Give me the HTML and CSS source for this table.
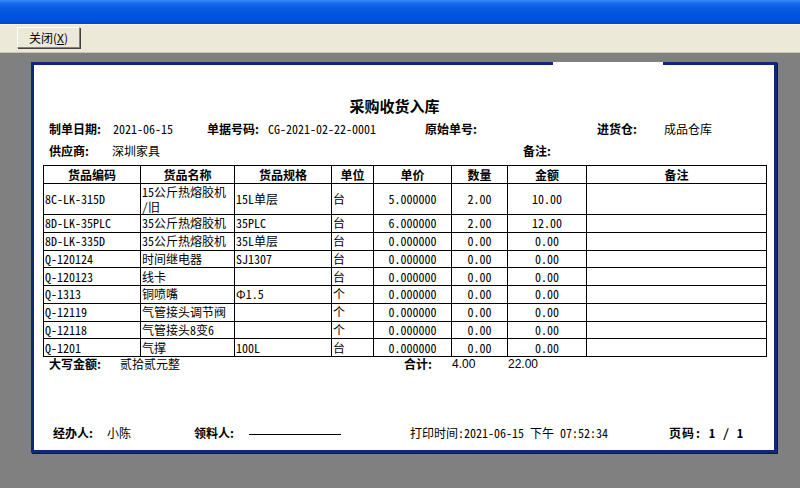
FILE: index.html
```html
<!DOCTYPE html>
<html lang="zh-CN">
<head>
<meta charset="utf-8">
<title>采购收货入库</title>
<link rel="stylesheet" href="styles.css">
</head>
<body>
<div class="window">
  <div class="titlebar"></div>
  <div class="toolbar">
    <button class="btn">关闭(<u>X</u>)</button>
  </div>
  <div class="workspace">
    <div class="paper">
      <div class="doc-title">采购收货入库</div>
      <div class="info-row">
        <span class="lbl w64">制单日期:</span>
        <span class="val w94">2021-06-15</span>
        <span class="lbl w61">单据号码:</span>
        <span class="val w157">CG-2021-02-22-0001</span>
        <span class="lbl w172">原始单号:</span>
        <span class="lbl w67">进货仓:</span>
        <span class="val">成品仓库</span>
      </div>
      <div class="info-row">
        <span class="lbl w63">供应商:</span>
        <span class="val w411">深圳家具</span>
        <span class="lbl">备注:</span>
      </div>
      <table class="grid">
        <colgroup>
          <col style="width:97px"><col style="width:94px"><col style="width:97px"><col style="width:42px">
          <col style="width:78px"><col style="width:56px"><col style="width:79px"><col style="width:180px">
        </colgroup>
        <thead>
          <tr class="head"><th>货品编码</th><th>货品名称</th><th>货品规格</th><th>单位</th><th>单价</th><th>数量</th><th>金额</th><th>备注</th></tr>
        </thead>
        <tbody>
          <tr class="tall"><td>8C-LK-315D</td><td class="wrap">15公斤热熔胶机<br>/旧</td><td>15L单层</td><td>台</td><td class="c">5.000000</td><td class="c">2.00</td><td class="c">10.00</td><td></td></tr>
          <tr><td>8D-LK-35PLC</td><td>35公斤热熔胶机</td><td>35PLC</td><td>台</td><td class="c">6.000000</td><td class="c">2.00</td><td class="c">12.00</td><td></td></tr>
          <tr><td>8D-LK-335D</td><td>35公斤热熔胶机</td><td>35L单层</td><td>台</td><td class="c">0.000000</td><td class="c">0.00</td><td class="c">0.00</td><td></td></tr>
          <tr><td>Q-120124</td><td>时间继电器</td><td>SJ1307</td><td>台</td><td class="c">0.000000</td><td class="c">0.00</td><td class="c">0.00</td><td></td></tr>
          <tr><td>Q-120123</td><td>线卡</td><td></td><td>台</td><td class="c">0.000000</td><td class="c">0.00</td><td class="c">0.00</td><td></td></tr>
          <tr><td>Q-1313</td><td>铜喷嘴</td><td>Φ1.5</td><td>个</td><td class="c">0.000000</td><td class="c">0.00</td><td class="c">0.00</td><td></td></tr>
          <tr><td>Q-12119</td><td>气管接头调节阀</td><td></td><td>个</td><td class="c">0.000000</td><td class="c">0.00</td><td class="c">0.00</td><td></td></tr>
          <tr><td>Q-12118</td><td>气管接头8变6</td><td></td><td>个</td><td class="c">0.000000</td><td class="c">0.00</td><td class="c">0.00</td><td></td></tr>
          <tr><td>Q-1201</td><td>气撑</td><td>100L</td><td>台</td><td class="c">0.000000</td><td class="c">0.00</td><td class="c">0.00</td><td></td></tr>
        </tbody>
      </table>
      <div class="total-row">
        <span class="lbl w71">大写金额:</span>
        <span class="val w284">贰拾贰元整</span>
        <span class="lbl w48">合计:</span>
        <span class="num w56">4.00</span>
        <span class="num">22.00</span>
      </div>
      <div class="footer">
        <span class="lbl w54">经办人:</span>
        <span class="val w87">小陈</span>
        <span class="lbl w55">领料人:</span>
        <span class="sign"></span>
        <span class="val w259">打印时间:2021-06-15 下午 07:52:34</span>
        <span class="lbl page">页码: 1 / 1</span>
      </div>
    </div>
  </div>
</div>
</body>
</html>
```

FILE: styles.css
```css
html, body {
  margin: 0;
  padding: 0;
}
body {
  width: 800px;
  height: 488px;
  overflow: hidden;
  background: #808080;
  font-family: "Noto Sans Mono CJK SC", "Noto Sans CJK SC", monospace;
  font-size: 12px;
  color: #000;
}
.window {
  display: flex;
  flex-direction: column;
  height: 488px;
}
.titlebar {
  height: 24px;
  background: linear-gradient(to bottom, #3a8cf8 0px, #1a6cf0 3px, #0a5be2 8px, #0055e0 14px, #0050dc 20px, #0046cc 24px);
}
.toolbar {
  background: #ece9d8;
  border-top: 1px solid #f6f4ec;
  border-bottom: 1px solid #c9c6b6;
  padding: 2px 0 0 17px;
  box-sizing: border-box;
  height: 29px;
}
.btn {
  width: 63px;
  height: 21px;
  padding: 0;
  margin: 0;
  background: #ece9d8;
  border: 1px solid;
  border-color: #ffffff #808080 #808080 #ffffff;
  box-shadow: 1px 1px 0 #404040;
  font-family: "Noto Sans CJK SC", sans-serif;
  font-size: 12px;
  color: #000;
  line-height: 18px;
}
.workspace {
  flex: 1;
  padding: 9px 0 0 31px;
}
.paper {
  position: relative;
  width: 740px;
  height: 385px;
  background: #fff;
  border: 3px solid #10287a;
  box-shadow: 1px 1px 0 #0a1a40;
}
.paper::after {
  content: "";
  position: absolute;
  top: -3px;
  left: 519px;
  width: 110px;
  height: 3px;
  background: #fff;
}
.doc-title {
  margin-top: 32px;
  height: 18px;
  line-height: 18px;
  text-align: center;
  padding-right: 19px;
  font-family: "Noto Sans CJK SC", sans-serif;
  font-weight: bold;
  font-size: 15px;
}
.info-row {
  display: flex;
  margin-top: 6px;
  padding-left: 15px;
  height: 16px;
  line-height: 16px;
  white-space: nowrap;
}
.lbl {
  font-family: "Noto Sans CJK SC", sans-serif;
  font-weight: bold;
  flex: none;
}
.lbl.page {
  font-family: "Noto Sans Mono CJK SC", "Noto Sans CJK SC", monospace;
  letter-spacing: 1px;
}
.val {
  flex: none;
}
.num {
  font-family: "Liberation Sans", sans-serif;
  flex: none;
}
.w48 { width: 48px; }
.w54 { width: 54px; }
.w55 { width: 55px; }
.w56 { width: 56px; }
.w61 { width: 61px; }
.w63 { width: 63px; }
.w64 { width: 64px; }
.w67 { width: 67px; }
.w71 { width: 71px; }
.w87 { width: 87px; }
.w94 { width: 94px; }
.w157 { width: 157px; }
.w172 { width: 172px; }
.w259 { width: 259px; }
.w284 { width: 284px; }
.w411 { width: 411px; }

.grid {
  margin: 6px 0 0 9px;
  border-collapse: collapse;
  table-layout: fixed;
  width: 724px;
}
.grid th, .grid td {
  border: 1px solid #000;
  padding: 0 1px;
  text-align: left;
  vertical-align: middle;
  white-space: nowrap;
  line-height: 14px;
  overflow: hidden;
}
.grid td.wrap {
  line-height: 15px;
}
.grid th {
  text-align: center;
  font-family: "Noto Sans CJK SC", sans-serif;
  font-weight: bold;
}
.grid tr { height: 17.75px; }
.grid tr.head { height: 18px; }
.grid tr.tall { height: 31px; }
.grid td.c { text-align: center; }

.total-row {
  display: flex;
  height: 14px;
  line-height: 14px;
  padding-left: 15px;
  white-space: nowrap;
}
.footer {
  display: flex;
  align-items: center;
  margin-top: 54px;
  padding-left: 19px;
  height: 16px;
  line-height: 16px;
  white-space: nowrap;
}
.sign {
  flex: none;
  width: 92px;
  height: 9px;
  border-bottom: 1px solid #000;
  margin-right: 69px;
  align-self: flex-start;
}
```
